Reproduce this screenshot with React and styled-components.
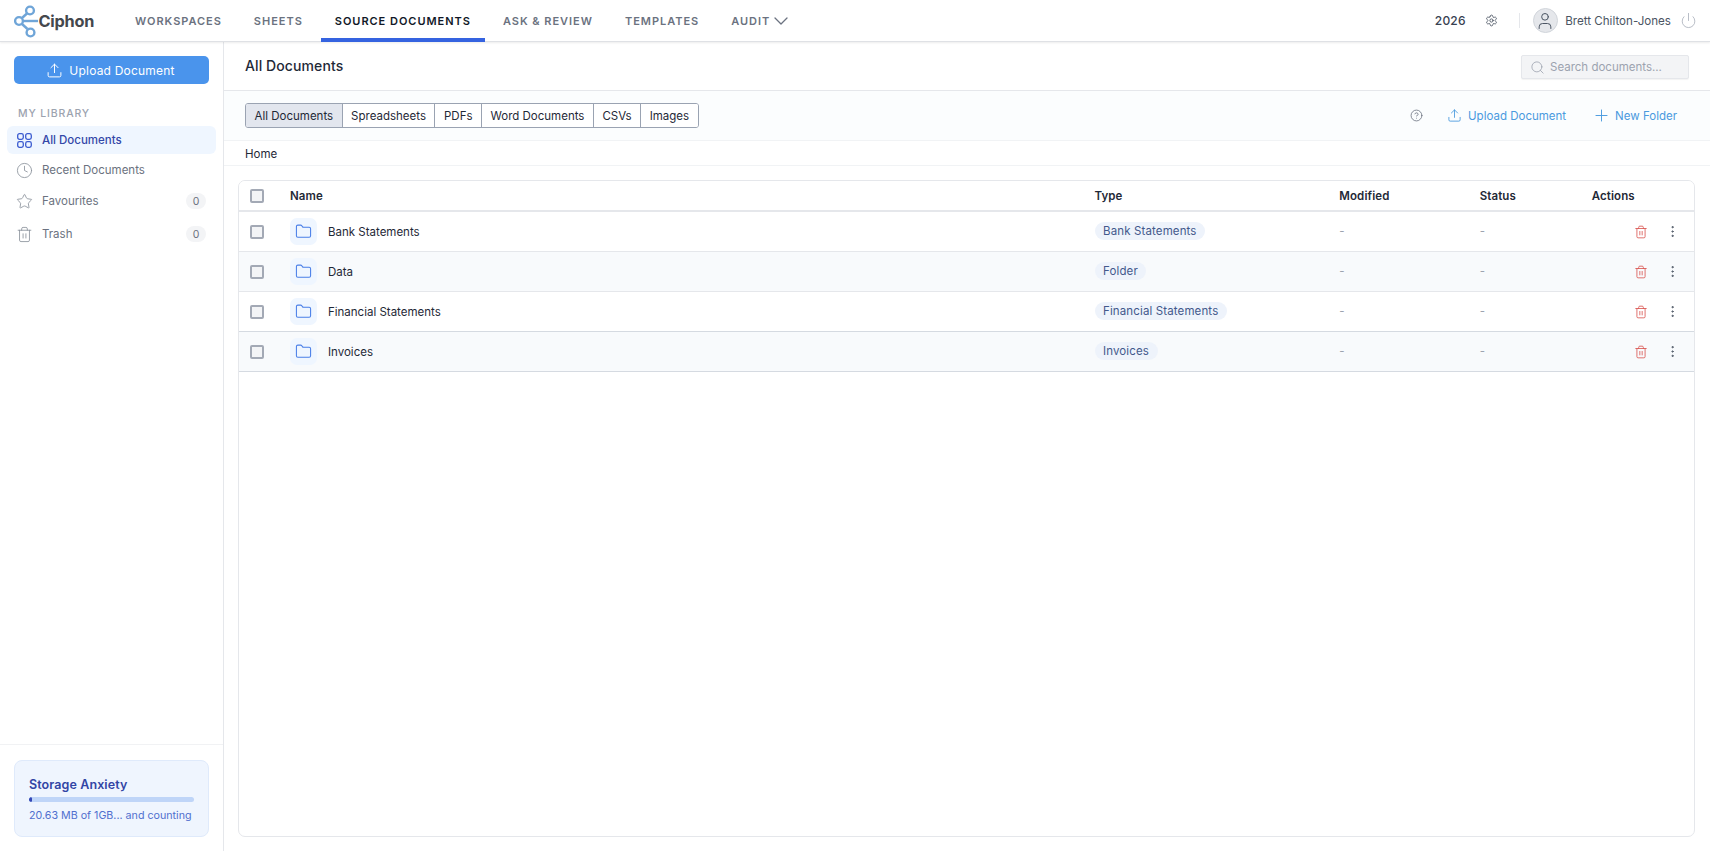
import React from "react";
import styled, { createGlobalStyle } from "styled-components";
import { Upload, Clock, Star, Trash2, Settings, CircleHelp, Search, Plus, Power, User, Folder, EllipsisVertical, ChevronDown } from "lucide-react";

const Global = createGlobalStyle`
  html, body { margin: 0; padding: 0; background: #fff; }
  body { font-family: Inter, "Noto Sans", sans-serif; color: #1f2937; -webkit-font-smoothing: antialiased; }
  * { box-sizing: border-box; }
`;
const Page = styled.div`display: flex; flex-direction: column; height: 851px; overflow: hidden;`;
const TopBar = styled.header`
  height: 42px; flex: none; display: flex; align-items: stretch; background: #fff;
  border-bottom: 1px solid #dfe1e5; box-shadow: 0 1px 2px rgba(0,0,0,.08); position: relative; z-index: 2;
  padding-right: 13px;
`;
const Brand = styled.div`width: 121px; padding-left: 14px; display: flex; align-items: center; flex: none;`;
const BrandName = styled.span`font-size: 16.3px; font-weight: 700; color: #44484d; letter-spacing: -0.2px; margin-left: -2.5px;`;
const Nav = styled.nav`display: flex; align-items: stretch;`;
const NavItem = styled.div`
  display: flex; align-items: center; padding: 0 14px; margin-right: 4px; height: 42px;
  font-size: 11px; font-weight: 600; letter-spacing: .97px; white-space: nowrap;
  color: ${p => (p.$active ? "#111827" : "#6b7280")};
  border-bottom: 4px solid ${p => (p.$active ? "#3563e0" : "transparent")};
  padding-top: 3px;
`;
const Right = styled.div`margin-left: auto; display: flex; align-items: center;`;
const Year = styled.span`font-size: 12px; font-weight: 500; letter-spacing: .2px; color: #374151;`;
const GearIcon = styled(Settings)`margin-left: 19px; color: #4b5563;`;
const Divider = styled.span`width: 1px; height: 15px; background: #e5e7eb; margin: 0 13px 0 21px;`;
const Avatar = styled.span`
  width: 25px; height: 25px; border-radius: 50%; background: #e5e7eb; border: 1px solid #d1d5db;
  display: flex; align-items: center; justify-content: center; color: #4b5563;
`;
const UserName = styled.span`font-size: 11.6px; font-weight: 400; color: #4b5563; margin: 0 9px 0 7.5px; white-space: nowrap;`;
const Body = styled.div`flex: 1; display: flex; min-height: 0;`;
const Sidebar = styled.aside`width: 224px; flex: none; border-right: 1px solid #e5e7eb; display: flex; flex-direction: column;`;
const SideTop = styled.div`flex: 1; padding: 14px 7px 0;`;
const PrimaryButton = styled.div`
  margin: 0 7px; height: 28px; border-radius: 5px; background: #4a94ec; color: #fff; padding-right: 2px;
  display: flex; align-items: center; justify-content: center; gap: 6px; font-size: 12px; font-weight: 400; letter-spacing: .2px;
`;
const SectionLabel = styled.div`font-size: 10.5px; font-weight: 500; letter-spacing: .85px; color: #9ca3af; margin: 19px 0 0 11px; height: 23px; line-height: 21px;`;
const SideItem = styled.div`
  height: 28px; padding: 0 10px; margin-bottom: ${p => p.$mb || 3}px; border-radius: 6px; display: flex; align-items: center; gap: 10px;
  font-size: 11.5px; font-weight: ${p => (p.$active ? 500 : 400)};
  background: ${p => (p.$active ? "#eff6ff" : "transparent")};
  color: ${p => (p.$active ? "#3347a8" : "#6b7280")};
`;
const IconSlot = styled.span`
  width: 15px; height: 15px; flex: none; display: flex; align-items: center; justify-content: center;
  color: ${p => (p.$active ? "#3b5bd0" : "#8b929c")};
  svg { flex: none; }
`;
const CountBadge = styled.span`
  margin-left: auto; width: 20px; height: 16px; border-radius: 8px; background: #f3f4f6; color: #6b7280;
  font-size: 10.5px; display: flex; align-items: center; justify-content: center;
`;
const StorageWrap = styled.div`border-top: 1px solid #f1f2f4; padding: 15px 14px 14px;`;
const StorageCard = styled.div`height: 77px; background: #eff5fe; border: 1px solid #dfeafb; border-radius: 8px; padding: 16px 14px 0;`;
const StorageTitle = styled.div`font-size: 12.5px; font-weight: 600; color: #3245a5; letter-spacing: .1px; line-height: 16px;`;
const Track = styled.div`height: 5px; border-radius: 3px; background: #bfd5f8; margin-top: 4px; overflow: hidden;`;
const Fill = styled.div`height: 100%; background: #3347b5; border-radius: 3px;`;
const StorageText = styled.div`font-size: 10.7px; color: #4f6fce; margin-top: 7px; white-space: nowrap;`;
const Main = styled.main`flex: 1; min-width: 0; display: flex; flex-direction: column;`;
const TitleBar = styled.div`height: 49px; flex: none; border-bottom: 1px solid #e5e7eb; display: flex; align-items: center; justify-content: space-between; padding: 0 21px 0 21px;`;
const Title = styled.h1`margin: 0; font-size: 14px; font-weight: 500; color: #1f2937; letter-spacing: .1px; padding-bottom: 1px;`;
const SearchBox = styled.div`
  width: 168px; height: 24px; margin-top: 2px; background: #f3f4f6; border: 1px solid #e5e7eb; border-radius: 2px; box-shadow: 0 1px 1px rgba(0,0,0,.05);
  display: flex; align-items: center; gap: 5px; padding-left: 8px; color: #9ca3af; font-size: 11.5px;
`;
const Toolbar = styled.div`height: 50px; flex: none; background: #fbfdfe; border-bottom: 1px solid #f1f3f5; display: flex; align-items: center; justify-content: space-between; padding: 0 33px 0 21px;`;
const Segments = styled.div`display: flex; height: 25px; border: 1px solid #9aa3b2; border-radius: 3px; overflow: hidden; background: #fff;`;
const Segment = styled.div`
  padding: 0 8.5px; display: flex; align-items: center; font-size: 11.5px; font-weight: 400; color: #1f2937; white-space: nowrap;
  background: ${p => (p.$active ? "#e2e6ee" : "#fff")};
  border-left: ${p => (p.$first ? "none" : "1px solid #9aa3b2")};
`;
const ToolActions = styled.div`display: flex; align-items: center;`;
const LinkAction = styled.div`display: flex; align-items: center; gap: ${p => p.$gap}px; color: #4a9ade; font-size: 11.5px; font-weight: 400; margin-left: ${p => p.$ml}px;`;
const Crumbs = styled.div`height: 25px; flex: none; border-bottom: 1px solid #f1f3f5; padding: 1px 21px 0; display: flex; align-items: center; font-size: 11.5px; font-weight: 400; color: #1f2937;`;
const Content = styled.div`flex: 1; min-height: 0; padding: 14px 15px 14px 14px;`;
const Card = styled.div`height: 100%; border: 1px solid #e5e7eb; border-radius: 7px; overflow: hidden;`;
const Row = styled.div`
  display: grid; grid-template-columns: 40px 804.5px 244.8px 140.4px 112px 1fr; align-items: center;
  height: 40px; padding-left: 11px;
  background: ${p => (p.$alt ? "#f8fafc" : "#fff")};
  border-bottom: 1px solid ${p => (p.$strong ? "#d5dae1" : "#e5e7eb")};
  ${p => p.$head && "border-bottom-width: 2px; height: 31px;"}
`;
const HeadCell = styled.div`font-size: 11.5px; font-weight: 600; letter-spacing: .1px; color: #1f2937;`;
const Check = styled.span`display: block; width: 14px; height: 14px; border: 2px solid #a3a9b5; border-radius: 2px; background: #f3f4f6;`;
const NameCell = styled.div`display: flex; align-items: center; gap: 11px; font-size: 11.5px; font-weight: 400; color: #1f2937;`;
const Tile = styled.span`width: 27px; height: 27px; border-radius: 7px; background: #eff6ff; display: flex; align-items: center; justify-content: center; color: #4a7fe8;`;
const PillCell = styled.div`display: flex; align-items: center; margin-top: -2px;`;
const Pill = styled.span`
  padding: 0 8.5px; height: 18px; line-height: 18px; border-radius: 9px; background: #eef3fb; color: #43598c;
  font-size: 11.5px; font-weight: 400; letter-spacing: .13px;
`;
const Dash = styled.span`font-size: 11.5px; color: #9ca3af; margin-top: -1px;`;
const Actions = styled.div`display: flex; justify-content: flex-end; align-items: center; gap: 17px; padding-right: 14px; color: #4b5563;`;
const TrashIcon = styled(Trash2)`color: #d9534f;`;
const AuditChevron = styled(ChevronDown)`margin: -4px 0 -4px -1px;`;

const GridIcon = () => (
  <svg width="15" height="15" viewBox="0 0 15 15" fill="none" stroke="currentColor" strokeWidth="1.3">
    <rect x=".7" y=".7" width="5.6" height="5.6" rx="1.8" />
    <rect x="8.7" y=".7" width="5.6" height="5.6" rx="1.8" />
    <rect x=".7" y="8.7" width="5.6" height="5.6" rx="1.8" />
    <rect x="8.7" y="8.7" width="5.6" height="5.6" rx="1.8" />
  </svg>
);
const Logo = () => (
  <svg width="27" height="38" viewBox="0 0 27 38" fill="none" stroke="#6fa5d8" strokeWidth="2.4" style={{ flex: "none" }}>
    <path d="M8 16 L13.500 11" />
    <path d="M8 22 L13.500 27" />
    <path d="M9 19 H24" />
    <circle cx="16" cy="8.5" r="3.9" />
    <circle cx="5" cy="19" r="3.9" />
    <circle cx="16.500" cy="30.500" r="3.9" />
  </svg>
);

const rows = [
  { name: "Bank Statements", type: "Bank Statements" },
  { name: "Data", type: "Folder", alt: true },
  { name: "Financial Statements", type: "Financial Statements", strong: true },
  { name: "Invoices", type: "Invoices", alt: true, strong: true },
];
const tabs = ["All Documents", "Spreadsheets", "PDFs", "Word Documents", "CSVs", "Images"];
const navs = ["WORKSPACES", "SHEETS", "SOURCE DOCUMENTS", "ASK & REVIEW", "TEMPLATES"];

export default function App() {
  return (
    <Page>
      <Global />
      <TopBar>
        <Brand><Logo /><BrandName>Ciphon</BrandName></Brand>
        <Nav>
          {navs.map(n => <NavItem key={n} $active={n === "SOURCE DOCUMENTS"}>{n}</NavItem>)}
          <NavItem>AUDIT<AuditChevron size={24} strokeWidth={1.3} /></NavItem>
        </Nav>
        <Right>
          <Year>2026</Year>
          <GearIcon size={13} strokeWidth={1.6} />
          <Divider />
          <Avatar><User size={20} strokeWidth={1.2} /></Avatar>
          <UserName>Brett Chilton-Jones</UserName>
          <Power size={17} strokeWidth={1} color="#9ca3af" />
        </Right>
      </TopBar>
      <Body>
        <Sidebar>
          <SideTop>
            <PrimaryButton><Upload size={17} strokeWidth={1.4} />Upload Document</PrimaryButton>
            <SectionLabel>MY LIBRARY</SectionLabel>
            <SideItem $active $mb={2}><IconSlot $active><GridIcon /></IconSlot>All Documents</SideItem>
            <SideItem><IconSlot><Clock size={17} strokeWidth={1.2} /></IconSlot>Recent Documents</SideItem>
            <SideItem $mb={5}><IconSlot><Star size={17} strokeWidth={1.2} /></IconSlot>Favourites<CountBadge>0</CountBadge></SideItem>
            <SideItem><IconSlot><Trash2 size={17} strokeWidth={1.2} /></IconSlot>Trash<CountBadge>0</CountBadge></SideItem>
          </SideTop>
          <StorageWrap>
            <StorageCard>
              <StorageTitle>Storage Anxiety</StorageTitle>
              <Track><Fill style={{ width: "2.1%" }} /></Track>
              <StorageText>20.63 MB of 1GB... and counting</StorageText>
            </StorageCard>
          </StorageWrap>
        </Sidebar>
        <Main>
          <TitleBar>
            <Title>All Documents</Title>
            <SearchBox><Search size={15} strokeWidth={1.3} />Search documents...</SearchBox>
          </TitleBar>
          <Toolbar>
            <Segments>
              {tabs.map((t, i) => <Segment key={t} $first={i === 0} $active={i === 0}>{t}</Segment>)}
            </Segments>
            <ToolActions>
              <CircleHelp size={13} strokeWidth={1.5} color="#6b7280" />
              <LinkAction $ml={24} $gap={6}><Upload size={15} strokeWidth={1.4} />Upload Document</LinkAction>
              <LinkAction $ml={26} $gap={4}><Plus size={19} strokeWidth={1.2} />New Folder</LinkAction>
            </ToolActions>
          </Toolbar>
          <Crumbs>Home</Crumbs>
          <Content>
            <Card>
              <Row $head>
                <Check />
                <HeadCell>Name</HeadCell>
                <HeadCell>Type</HeadCell>
                <HeadCell>Modified</HeadCell>
                <HeadCell>Status</HeadCell>
                <HeadCell>Actions</HeadCell>
              </Row>
              {rows.map(r => (
                <Row key={r.name} $alt={r.alt} $strong={r.strong}>
                  <Check />
                  <NameCell><Tile><Folder size={17} strokeWidth={1.5} /></Tile>{r.name}</NameCell>
                  <PillCell><Pill>{r.type}</Pill></PillCell>
                  <Dash>-</Dash>
                  <Dash>-</Dash>
                  <Actions><TrashIcon size={14} strokeWidth={1.4} /><EllipsisVertical size={15} strokeWidth={1.6} /></Actions>
                </Row>
              ))}
            </Card>
          </Content>
        </Main>
      </Body>
    </Page>
  );
}
